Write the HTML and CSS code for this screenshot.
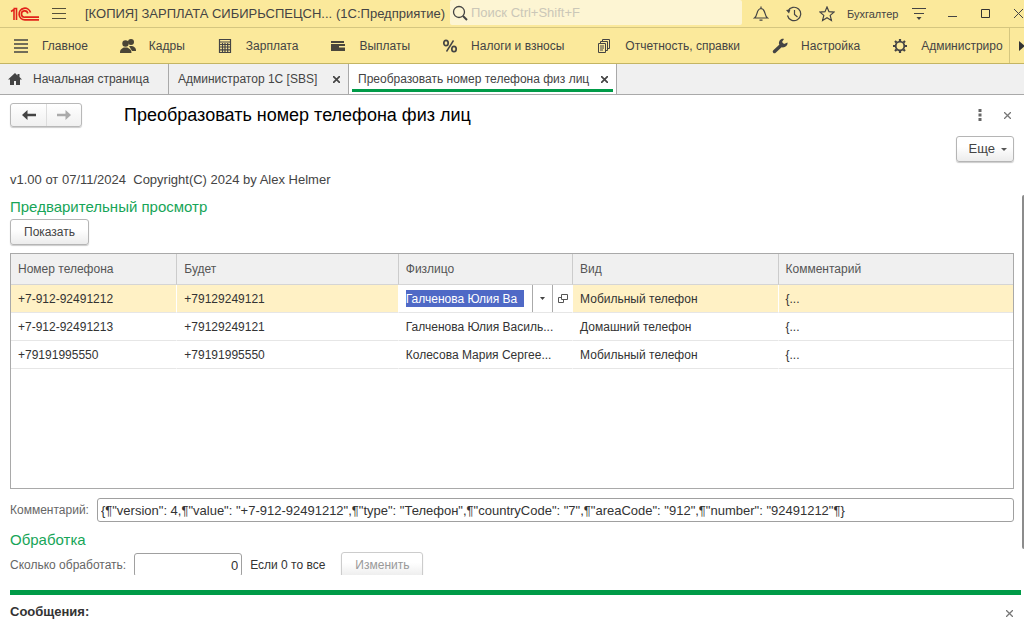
FILE: index.html
```html
<!DOCTYPE html>
<html lang="ru">
<head>
<meta charset="utf-8">
<title>Преобразовать номер телефона физ лиц</title>
<link rel="stylesheet" href="styles.css">
</head>
<body>
<div class="app">
  <header class="titlebar">
    <svg class="logo" width="30" height="16" viewBox="0 0 30 16" fill="none" stroke="#e2231a">
      <path d="M1 5.500 4 3.500V14M3.500 2.500H6.500V14" stroke-width="1.600"/>
      <path d="M20.500 6.500A5.800 5.800 0 1 0 15 13.800H29" stroke-width="1.700"/>
      <path d="M17.800 7.500A3.200 3.200 0 1 0 15 11.200H29" stroke-width="1.700"/>
    </svg>
    <button class="icon-btn burger" aria-label="Главное меню">
      <svg width="14" height="12" viewBox="0 0 14 12" stroke="#55503a"><path d="M0 .5h14M0 5.500h14M0 10.500h14"/></svg>
    </button>
    <span class="app-title">[КОПИЯ] ЗАРПЛАТА СИБИРЬСПЕЦСН...</span>
    <span class="app-kind">(1С:Предприятие)</span>
    <label class="search">
      <svg width="16" height="16" viewBox="0 0 16 16" fill="none" stroke="#444"><circle cx="7" cy="7" r="5.500" stroke-width="1.300"/><path d="m11 11 4 4" stroke-width="2"/></svg>
      <input type="search" placeholder="Поиск Ctrl+Shift+F" aria-label="Поиск">
    </label>
    <div class="tools">
      <button class="icon-btn" aria-label="Уведомления"><svg width="16" height="16" viewBox="0 0 16 16" fill="none" stroke="#444" stroke-width="1.200"><path d="M1.500 12C5 9.500 3 3 8 2.500c5 .500 3 7 6.500 9.500zM8 2.500V.5M6.500 14.200h3"/></svg></button>
      <button class="icon-btn" aria-label="История"><svg width="16" height="16" viewBox="0 0 16 16" fill="none" stroke="#444" stroke-width="1.200"><path d="M2 5a6.700 6.700 0 1 1-.500 4.500M8.500 4v4.500l3 2.500"/><path d="M0 4 4.500 3.500 3 7.500z" fill="#444" stroke="none"/></svg></button>
      <button class="icon-btn" aria-label="Избранное"><svg width="16" height="16" viewBox="0 0 16 16" fill="none" stroke="#444" stroke-width="1.200"><path d="m8 1 2 4.700 5 .4-3.800 3.300 1.200 5L8 11.700l-4.400 2.700 1.200-5L1 6.100l5-.4z"/></svg></button>
      <span class="user">Бухгалтер</span>
      <button class="icon-btn" aria-label="Настройки окна"><svg width="16" height="16" viewBox="0 0 16 16" fill="none" stroke="#444" stroke-width="1.200"><path d="M1 2.500h14M3 7.500h10"/><path d="M5.500 11h5L8 14z" fill="#444" stroke="none"/></svg></button>
      <button class="icon-btn" aria-label="Свернуть"><svg width="16" height="16" viewBox="0 0 16 16" stroke="#444"><path d="M4 10.500h9"/></svg></button>
      <button class="icon-btn" aria-label="Развернуть"><svg width="16" height="16" viewBox="0 0 16 16" fill="none" stroke="#333"><path d="M4.500 3.500h8v8h-8z"/></svg></button>
      <button class="icon-btn" aria-label="Закрыть"><svg width="16" height="16" viewBox="0 0 16 16" stroke="#444"><path d="m4 3 9 9m0-9-9 9"/></svg></button>
    </div>
  </header>

  <nav class="sections">
    <div class="section-list">
      <a href="#"><svg viewBox="0 0 16 16" stroke="#444" stroke-width="1.600"><path d="M1 2h14M1 6h14M1 10h14M1 14h14"/></svg>Главное</a>
      <a href="#"><svg viewBox="0 0 16 16" fill="#4a4536"><circle cx="11" cy="4" r="3"/><path d="M9 8h3c2 .5 4 1.500 4 5h-4z"/><circle cx="5.500" cy="5.500" r="3.200"/><path d="M0 15c0-4 2-4.500 4-5.500h3c2 1 4.500 1.500 4.500 5.500z"/></svg>Кадры</a>
      <a href="#"><svg viewBox="0 0 16 16" fill="none" stroke="#444" stroke-width="1.200"><path d="M2.500 1.500h11v13h-11zM2.500 4h11M2.500 6.500h11M2.500 9h11M2.500 11.800h11M5.500 5v9M8 5v9M10.700 5v9"/></svg>Зарплата</a>
      <a href="#"><svg viewBox="0 0 16 16" fill="#4a463c"><path d="M1 3h13v2H1zM1 6h14v7H1z"/><path d="M9 8h6v1.500H9z" fill="#fbe99b"/></svg>Выплаты</a>
      <a href="#"><svg viewBox="0 0 16 16" fill="none" stroke="#444" stroke-width="1.700"><ellipse cx="4" cy="5" rx="2.200" ry="2.700"/><ellipse cx="12" cy="11" rx="2.200" ry="2.700"/><path d="M11.500 2.500 4.500 13.500" stroke-width="1.400"/></svg>Налоги и взносы</a>
      <a href="#"><svg viewBox="0 0 16 16" fill="none" stroke="#444"><path d="M2.500 5.500h7v9h-7zM4.500 5.500v-2h7v9h-2M6.500 3.500v-2h7v9h-2M4 8h4M4 10h4M4 12h3"/></svg>Отчетность, справки</a>
      <a href="#"><svg viewBox="0 0 16 16"><path d="m2.500 13.500 7-6.500" stroke="#444" stroke-width="3.500" stroke-linecap="round"/><path d="M7 6c-.5-3 2-6 5-5L10 4l2 2 3.500-1.500C16 8 12 10.500 9 9z" fill="#444"/></svg>Настройка</a>
      <a href="#"><svg viewBox="0 0 16 16" fill="none" stroke="#444"><circle cx="8" cy="8" r="4.300" stroke-width="1.800"/><path d="M8 1v2M8 13v2M1 8h2M13 8h2M3 3l1.500 1.500M11.500 11.500 13 13M13 3l-1.500 1.500M4.500 11.500 3 13" stroke-width="2.200"/></svg>Администриро</a>
    </div>
    <button class="scroll-right" aria-label="Далее"><svg width="6" height="10" viewBox="0 0 6 10"><path d="M0 0 6 5 0 10z" fill="#333"/></svg></button>
  </nav>

  <div class="tabs">
    <a class="tab home" href="#"><svg width="14" height="12" viewBox="0 0 14 12"><path d="M7 0 0 6.500h2V12h4V8h2v4h4V6.500h2L11.500 4V1h-2v1.500z" fill="#444"/></svg>Начальная страница</a>
    <div class="tab"><span>Администратор 1С [SBS]</span><button class="close" aria-label="Закрыть вкладку"><svg width="7" height="7" viewBox="0 0 7 7" stroke="#444" stroke-width="1.700"><path d="m0 0 7 7m0-7L0 7"/></svg></button></div>
    <div class="tab active"><span>Преобразовать номер телефона физ лиц</span><button class="close" aria-label="Закрыть вкладку"><svg width="7" height="7" viewBox="0 0 7 7" stroke="#444" stroke-width="1.700"><path d="m0 0 7 7m0-7L0 7"/></svg></button></div>
  </div>

  <main class="form">
    <div class="form-head">
      <div class="history">
        <button aria-label="Назад"><svg width="14" height="10" viewBox="0 0 14 10"><path d="M0 5 5.500 0v3.700H14v2.600H5.500V10z" fill="#444"/></svg></button>
        <button aria-label="Вперед"><svg width="14" height="10" viewBox="0 0 14 10"><path d="M14 5 8.500 0v3.700H0v2.600h8.500V10z" fill="#aaa"/></svg></button>
      </div>
      <h1>Преобразовать номер телефона физ лиц</h1>
      <button class="icon-btn" aria-label="Действия"><svg width="4" height="12" viewBox="0 0 4 12" fill="#666"><path d="M.5 0h3v3h-3zM.5 4.500h3v3h-3zM.5 9h3v3h-3z"/></svg></button>
      <button class="icon-btn form-close" aria-label="Закрыть"><svg width="7" height="7" viewBox="0 0 7 7" stroke="#777" stroke-width="1.300"><path d="m0 0 7 7m0-7L0 7"/></svg></button>
    </div>
    <div class="commands"><button class="btn more">Еще<svg width="6" height="3" viewBox="0 0 6 3"><path d="M0 0h6L3 3z" fill="#555"/></svg></button></div>

    <div class="scroll-body">
      <p class="version">v1.00 от 07/11/2024&nbsp; Copyright(C) 2024 by Alex Helmer</p>
      <h2>Предварительный просмотр</h2>
      <button class="btn">Показать</button>
      <div class="grid">
        <table>
          <colgroup><col class="c-phone"><col class="c-new"><col class="c-person"><col class="c-kind"><col class="c-note"></colgroup>
          <thead><tr><th>Номер телефона</th><th>Будет</th><th>Физлицо</th><th>Вид</th><th>Комментарий</th></tr></thead>
          <tbody>
            <tr class="current"><td>+7-912-92491212</td><td>+79129249121</td>
              <td class="editing"><div class="editor"><input type="text" value="Галченова Юлия Ва" aria-label="Физлицо"><button aria-label="Выбрать из списка"><svg width="5" height="3" viewBox="0 0 5 3"><path d="M0 0h5L2.500 3z" fill="#444"/></svg></button><button aria-label="Открыть"><svg width="10" height="10" viewBox="0 0 10 10" fill="none" stroke="#555"><path d="M3.500.5h6v5h-6zM3.500 3.500h-3v5h5v-3"/></svg></button></div></td>
              <td>Мобильный телефон</td><td>{...</td></tr>
            <tr><td>+7-912-92491213</td><td>+79129249121</td><td>Галченова Юлия Василь...</td><td>Домашний телефон</td><td>{...</td></tr>
            <tr><td>+79191995550</td><td>+79191995550</td><td>Колесова Мария Сергее...</td><td>Мобильный телефон</td><td>{...</td></tr>
          </tbody>
        </table>
      </div>
      <div class="field">
        <label for="note">Комментарий:</label>
        <input id="note" type="text" value='{¶"version": 4,¶"value": "+7-912-92491212",¶"type": "Телефон",¶"countryCode": "7",¶"areaCode": "912",¶"number": "92491212"¶}'>
      </div>
      <h2>Обработка</h2>
      <div class="field">
        <label for="count">Сколько обработать:</label>
        <input id="count" class="count" type="text" value="0">
        <span class="hint">Если 0 то все</span>
        <button class="btn" disabled>Изменить</button>
      </div>
      <div class="scrollbar"></div>
    </div>
  </main>

  <section class="messages">
    <h3>Сообщения:</h3>
    <button class="icon-btn" aria-label="Закрыть сообщения"><svg width="7" height="7" viewBox="0 0 7 7" stroke="#777" stroke-width="1.300"><path d="m0 0 7 7m0-7L0 7"/></svg></button>
  </section>
</div>
</body>
</html>
```
FILE: styles.css
```css
* { box-sizing: border-box; }
body { margin: 0; font: 12px/16px "Liberation Sans", Arial, sans-serif; color: #444; background: #fff; }
h1, h2, h3, p { margin: 0; font-weight: normal; }
button, input { font: inherit; color: inherit; margin: 0; }
a { color: inherit; text-decoration: none; }
svg { display: block; flex: none; }
.app { display: flex; flex-direction: column; height: 100vh; overflow: hidden; }

.icon-btn { display: flex; align-items: center; justify-content: center; padding: 0; border: 0; background: none; flex: none; }

.titlebar { display: flex; align-items: center; height: 28px; flex: none; overflow: hidden; padding-left: 10px; background: #fbe99b; border-bottom: 1px solid #d5c67f; font-size: 13px; }
.burger { margin: 0 19px 0 12px; }
.app-title { width: 248px; white-space: nowrap; }
.app-kind { margin-left: 3px; width: 114px; white-space: nowrap; }
.search { display: flex; align-items: center; flex: 1; gap: 3px; height: 25px; align-self: flex-start; padding-left: 2px; background: #fdf5d3; border-radius: 2px; }
.search input { flex: 1; min-width: 0; border: 0; padding: 0; background: none; outline: 0; }
.search input::placeholder { color: #cbc7b8; opacity: 1; }
.tools { display: flex; align-items: center; flex: none; gap: 17px; padding-left: 11px; margin-right: -2px; }
.user { width: 52px; margin: 0 -5px 0 -5px; font-size: 11px; white-space: nowrap; }

.sections { display: flex; height: 36px; flex: none; background: #fbe99b; border-bottom: 1px solid #c4b563; }
.section-list { display: flex; flex: 1; min-width: 0; overflow: hidden; gap: 32px; padding-left: 13px; }
.section-list a { display: flex; align-items: center; gap: 13px; flex: none; white-space: nowrap; }
.section-list svg { width: 16px; height: 16px; }
.scroll-right { width: 15px; padding: 0 0 0 9px; border: 0; border-left: 1px solid #d5c67f; background: none; overflow: hidden; }

.tabs { display: flex; height: 31px; flex: none; background: #f0f0f0; border-bottom: 1px solid #a9a9a9; }
.tab { display: flex; align-items: center; justify-content: space-between; gap: 12px; min-width: 180px; padding: 0 8px 0 9px; border-right: 1px solid #a9a9a9; white-space: nowrap; }
.tab.home { justify-content: flex-start; gap: 11px; min-width: 169px; padding-left: 8px; }
.tab.active { position: relative; min-width: 268px; background: #fff; }
.tab.active::after { content: ""; position: absolute; left: 3px; right: 3px; bottom: 2px; height: 3px; background: #009b48; }
.close { padding: 0; border: 0; background: none; }

.form { display: flex; flex-direction: column; flex: 1; min-height: 0; }
.form-head { display: flex; align-items: center; height: 40px; flex: none; padding: 0 13px 0 10px; }
.form-head h1 { flex: 1; margin-left: 42px; font-size: 18px; line-height: 24px; color: #000; }
.form-close { margin-left: 22px; }
.history { display: flex; border: 1px solid #b8b8b8; border-radius: 3px; background: linear-gradient(#fff, #f0f0f0); box-shadow: 0 1px 1px #ccc; }
.history button { display: flex; align-items: center; justify-content: center; width: 35px; height: 22px; padding: 0; border: 0; background: none; }
.history button + button { border-left: 1px solid #ddd; }
.btn { display: inline-flex; align-items: center; height: 26px; padding: 0 13px; border: 1px solid #b5b5b5; border-radius: 3px; background: linear-gradient(#fff 40%, #ececec); box-shadow: 0 1px 1px #ccc; }
.btn:disabled { color: #999; border-color: #ccc; }
.commands { display: flex; justify-content: flex-end; padding: 1px 10px 0; flex: none; }
.more { gap: 6px; padding: 0 6px 0 12px; font-size: 13px; }

.scroll-body { position: relative; flex: 1; min-height: 0; overflow: hidden; padding: 10px 10px 0; margin-bottom: 15px; }
.version { margin-bottom: 9px; font-size: 13px; }
h2 { font-size: 15px; line-height: 20px; color: #17a558; margin-bottom: 2px; }
.grid { height: 236px; margin: 8px 0 9px; border: 1px solid #a9a9a9; overflow: hidden; }
table { width: 100%; table-layout: fixed; border-collapse: separate; border-spacing: 0; }
.c-phone { width: 16.5%; }
.c-new { width: 22.1%; }
.c-person { width: 17.4%; }
.c-kind { width: 20.5%; }
th, td { height: 28px; padding: 0 7px; text-align: left; font-weight: normal; overflow: hidden; white-space: nowrap; text-overflow: ellipsis; border-bottom: 1px solid #e6e6e6; }
th { height: 31px; background: #f0f0f0; border-bottom-color: #d5d5d5; color: #555; }
th + th { border-left: 1px solid #ccc; }
td + td { border-left: 1px solid transparent; }
td { color: #333; }
.current td { background: #fff1c5; background-clip: padding-box; }
.current td.editing { padding: 0; background: #fff; }
.editor { display: flex; align-items: center; height: 27px; padding-left: 7px; }
.editor input { flex: 1; min-width: 0; height: 17px; margin-right: 8px; padding: 0; border: 0; background: #4f69c6; color: #fff; }
.editor button { display: flex; align-items: center; justify-content: center; width: 20px; height: 27px; padding: 0; border: 0; border-left: 1px solid #aaa; background: #fff; }

.field { display: flex; align-items: center; gap: 8px; margin-bottom: 8px; }
.field label { color: #666; white-space: nowrap; }
.field input { flex: 1; min-width: 0; height: 24px; padding: 0 3px; border: 1px solid #a0a0a0; border-radius: 3px; background: #fff; color: #333; font-size: 13px; }
.field .count { flex: none; width: 108px; text-align: right; }
.hint { margin-right: 8px; color: #333; }
.scrollbar { position: absolute; right: 0; top: 33px; bottom: 26px; width: 2px; border-radius: 2px 0 0 2px; background: #8c8c8c; }

.messages { display: flex; align-items: flex-start; justify-content: space-between; flex: none; height: 42px; margin: 0 3px 0 10px; padding: 9px 8px 0 0; border-top: 5px solid #009b48; }
.messages h3 { font-size: 13px; font-weight: bold; color: #333; }
.messages button { margin-top: 6px; }
```
